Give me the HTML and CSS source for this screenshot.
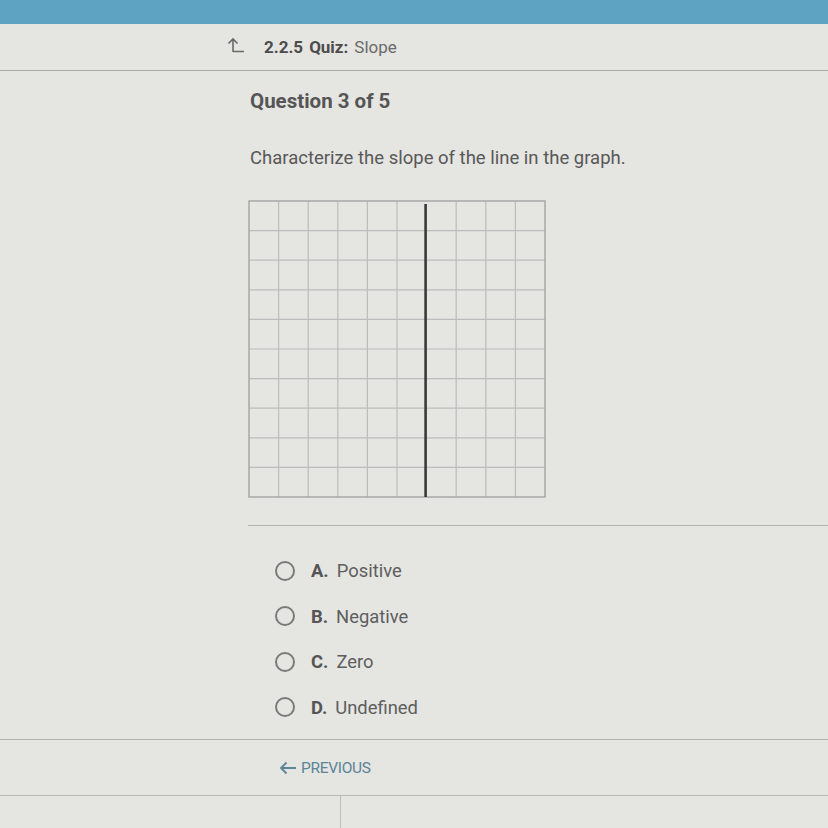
FILE: index.html
```html
<!DOCTYPE html>
<html lang="en">
<head>
    <meta charset="UTF-8">
    <title>2.2.5 Quiz: Slope</title>
    <link rel="stylesheet" href="styles.css">
</head>
<body>

    <!-- Top bar -->
    <div class="topbar"></div>

    <!-- Quiz title -->
    <div class="header">
        <svg class="up-icon" width="18" height="16" viewBox="0 0 18 16">
            <path d="M6 15 V2 M1.5 6.5 L6 2 L10.5 6.5 M6 14.5 H17" fill="none" stroke="#6a6a6a" stroke-width="1.6"/>
        </svg>
        <span class="quiz-num">2.2.5</span>
        <span class="quiz-label">Quiz:</span>
        <span class="quiz-name">Slope</span>
    </div>

    <div class="content">
        <h2 class="question-count">Question 3 of 5</h2>
        <p class="prompt">Characterize the slope of the line in the graph.</p>

        <!-- Graph: 10 x 10 grid with a vertical line -->
        <svg class="graph" width="298" height="298" viewBox="0 0 298 298">
            <g stroke="#bcbcbc" stroke-width="1.2">
                <line x1="30.6" y1="1" x2="30.6" y2="297"/>
                <line x1="60.2" y1="1" x2="60.2" y2="297"/>
                <line x1="89.8" y1="1" x2="89.8" y2="297"/>
                <line x1="119.4" y1="1" x2="119.4" y2="297"/>
                <line x1="149" y1="1" x2="149" y2="297"/>
                <line x1="208.2" y1="1" x2="208.2" y2="297"/>
                <line x1="237.8" y1="1" x2="237.8" y2="297"/>
                <line x1="267.4" y1="1" x2="267.4" y2="297"/>
                <line x1="1" y1="30.6" x2="297" y2="30.6"/>
                <line x1="1" y1="60.2" x2="297" y2="60.2"/>
                <line x1="1" y1="89.8" x2="297" y2="89.8"/>
                <line x1="1" y1="119.4" x2="297" y2="119.4"/>
                <line x1="1" y1="149" x2="297" y2="149"/>
                <line x1="1" y1="178.6" x2="297" y2="178.6"/>
                <line x1="1" y1="208.2" x2="297" y2="208.2"/>
                <line x1="1" y1="237.8" x2="297" y2="237.8"/>
                <line x1="1" y1="267.4" x2="297" y2="267.4"/>
            </g>
            <rect x="1" y="1" width="296" height="296" fill="none" stroke="#a4a4a4" stroke-width="1.4"/>
            <line x1="177.6" y1="4" x2="177.6" y2="297" stroke="#3a3a3a" stroke-width="2.6"/>
        </svg>
    </div>

    <div class="divider"></div>

    <!-- Answer choices -->
    <ul class="choices">
        <li><span class="radio"></span><span class="letter">A.</span>Positive</li>
        <li><span class="radio"></span><span class="letter">B.</span>Negative</li>
        <li><span class="radio"></span><span class="letter">C.</span>Zero</li>
        <li><span class="radio"></span><span class="letter">D.</span>Undefined</li>
    </ul>

    <div class="footer">
        <a class="previous" href="#">
            <svg width="18" height="14" viewBox="0 0 18 14">
                <path d="M17 7 H2 M7.5 1.5 L2 7 L7.5 12.5" fill="none" stroke="#5b8496" stroke-width="1.8"/>
            </svg>
            PREVIOUS
        </a>
    </div>

    <div class="bottom">
        <div class="bottom-left"></div>
    </div>

</body>
</html>
```

FILE: styles.css
```css
body {
    font-family: Roboto, "Liberation Sans", sans-serif;
    background-color: #e5e5e2;
    color: #585858;
    margin: 0;
    height: 828px;
    overflow: hidden;
}

.topbar {
    height: 24px;
    background-color: #5fa3c3;
}

.header {
    height: 46px;
    display: flex;
    align-items: center;
    padding-left: 227px;
    border-bottom: 1px solid #a9a9a7;
    font-size: 17px;
}

.up-icon {
    margin-right: 19px;
    margin-top: -4px;
}

.quiz-num,
.quiz-label {
    font-weight: bold;
    color: #4c4c4c;
    margin-right: 6px;
}

.quiz-name {
    color: #6a6a6a;
}

.content {
    padding-left: 248px;
}

.question-count {
    font-size: 20.5px;
    font-weight: bold;
    color: #555;
    margin: 18px 0 0 2px;
    line-height: 24px;
}

.prompt {
    font-size: 18.5px;
    margin: 34px 0 0 2px;
    line-height: 22px;
}

.graph {
    display: block;
    margin-top: 31px;
}

.divider {
    margin: 27px 0 0 248px;
    border-top: 1px solid #b3b3b1;
}

.choices {
    list-style: none;
    margin: 22px 0 0;
    padding: 0 0 0 275px;
}

.choices li {
    display: flex;
    align-items: center;
    height: 45.5px;
    font-size: 18.4px;
    color: #5e5e5e;
}

.radio {
    width: 16px;
    height: 16px;
    border: 2px solid #7a7a7a;
    border-radius: 50%;
    margin-right: 16px;
}

.letter {
    font-weight: bold;
    color: #555;
    margin-right: 8px;
}

.footer {
    margin-top: 9px;
    border-top: 1px solid #b3b3b1;
    border-bottom: 1px solid #b9b9b7;
    height: 55px;
    display: flex;
    align-items: center;
    padding-left: 279px;
}

.previous {
    display: flex;
    align-items: center;
    gap: 4px;
    color: #5b8496;
    text-decoration: none;
    font-size: 15.5px;
    letter-spacing: -0.3px;
}

.bottom {
    height: 40px;
}

.bottom-left {
    width: 340px;
    height: 100%;
    border-right: 1px solid #bdbdbb;
}
```
